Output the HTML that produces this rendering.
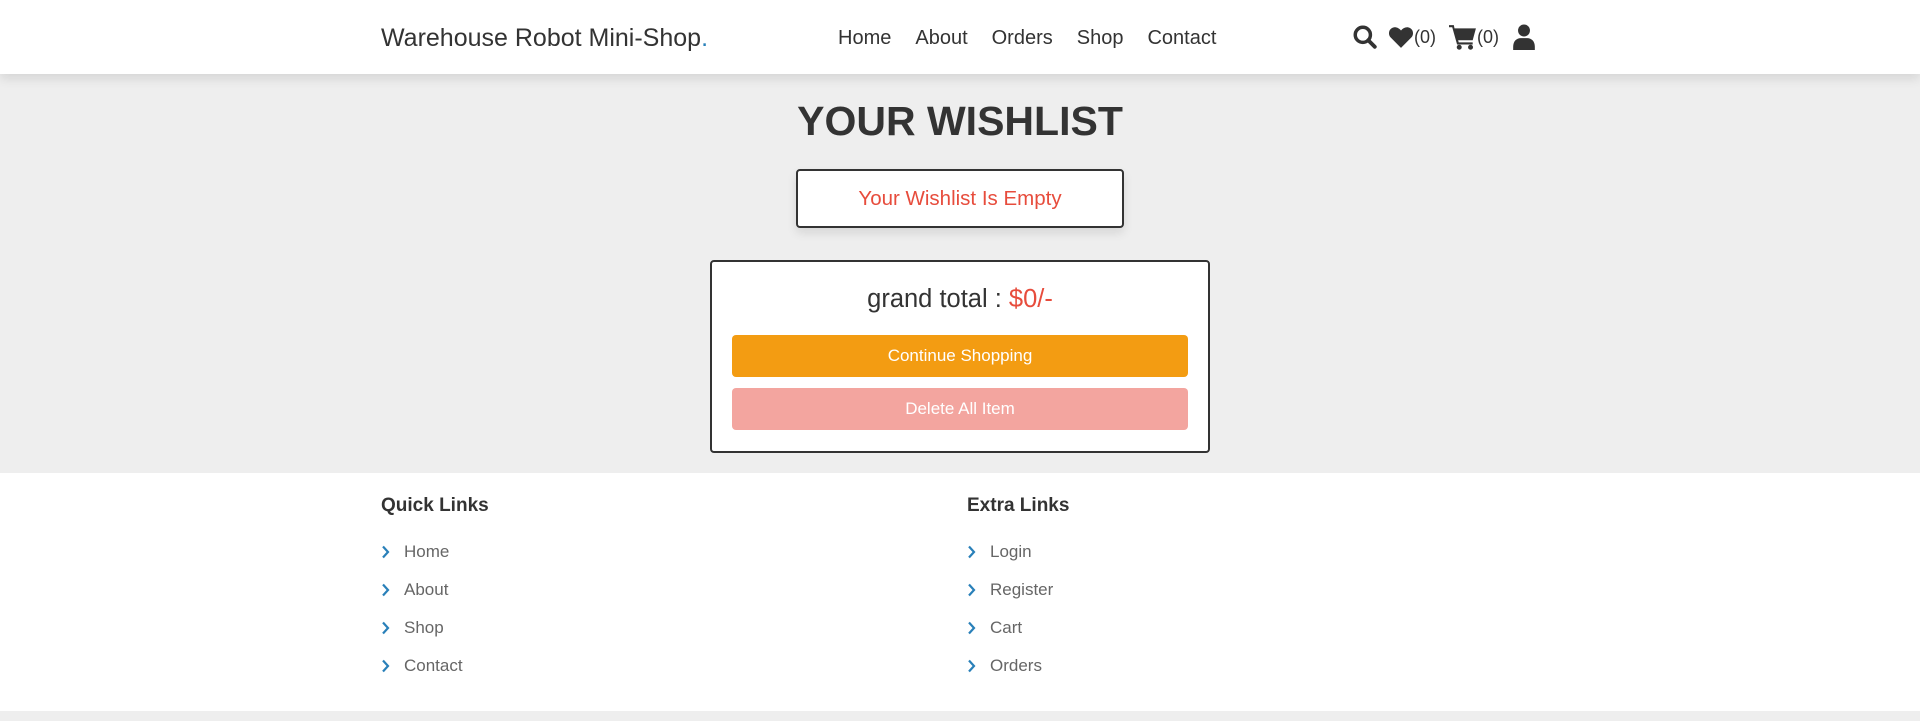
<!DOCTYPE html>
<html><head><meta charset="utf-8"><style>
*{margin:0;padding:0;box-sizing:border-box}
body{width:1920px;height:721px;overflow:hidden;background:#eee;font-family:"Liberation Sans",sans-serif;color:#333}
header{position:absolute;left:0;top:0;width:1920px;height:74px;background:#fff;box-shadow:0 5px 10px rgba(0,0,0,.1);z-index:2}
.logo{position:absolute;left:381px;top:24px;font-size:25px;color:#333}
.logo span{color:#2980b9}
nav{position:absolute;left:838px;top:27px;font-size:20px}
nav a{margin-right:24px;color:#333;text-decoration:none}
.icons{position:absolute;left:1352px;top:24px;display:flex;align-items:center;font-size:18px;color:#333}
.icons svg{fill:#333}
h1{position:absolute;left:0;width:1920px;top:98px;text-align:center;font-size:41px;font-weight:bold;color:#333}
.empty{position:absolute;left:796px;top:169px;width:328px;height:59px;background:#fff;border:2px solid #333;border-radius:4px;box-shadow:0 5px 10px rgba(0,0,0,.1);text-align:center;line-height:55px;font-size:20.5px;color:#e74c3c}
.total{position:absolute;left:710px;top:260px;width:500px;height:193px;background:#fff;border:2px solid #333;border-radius:4px}
.total p{position:absolute;top:23px;width:100%;text-align:center;font-size:25.5px;color:#333}
.total p span{color:#e74c3c}
.btn{position:absolute;left:20px;width:456px;height:42px;border-radius:4px;color:#fff;text-align:center;line-height:42px;font-size:17px}
.b1{top:73px;background:#f39c12}
.b2{top:126px;background:#f3a59f}
footer{position:absolute;left:0;top:473px;width:1920px;height:238px;background:#fff}
.col{position:absolute;top:22px}
.col h3{font-size:19px;font-weight:bold;color:#333;margin-bottom:16px}
.col a{display:flex;align-items:center;font-size:17px;color:#666;height:38px}
.col a svg{width:23px}
</style></head><body>
<header>
<div class="logo">Warehouse Robot Mini-Shop<span>.</span></div>
<nav><a>Home</a><a>About</a><a>Orders</a><a>Shop</a><a>Contact</a></nav>
<div class="icons">
<svg width="26" height="26" viewBox="0 0 24 24"><circle cx="10" cy="10" r="7" fill="none" stroke="#333" stroke-width="3.2"/><path d="M15 15l6 6" stroke="#333" stroke-width="3.6" stroke-linecap="round"/></svg>
<svg style="margin-left:10px" width="26" height="24" viewBox="0 0 24 22"><path d="M12 21L2.5 11.5C0 9 0.5 4.5 3.5 2.8 6.5 1.2 9.8 2.3 12 5 14.2 2.3 17.5 1.2 20.5 2.8 23.5 4.5 24 9 21.5 11.5Z"/></svg><span>(0)</span>
<svg style="margin-left:13px" width="28" height="26" viewBox="0 0 26 24"><path d="M0 1h4.5l.6 3H25l-3 11H8.5l.5 2H22v2H7.5L3 3H0z"/><circle cx="9.5" cy="21.5" r="2.3"/><circle cx="20" cy="21.5" r="2.3"/></svg><span>(0)</span>
<svg style="margin-left:14px" width="22" height="26" viewBox="0 0 20 24"><circle cx="10" cy="6" r="5.5"/><path d="M0 24v-3c0-5 3-8 7-8h6c4 0 7 3 7 8v3z"/></svg>
</div>
</header>
<h1>YOUR WISHLIST</h1>
<div class="empty">Your Wishlist Is Empty</div>
<div class="total">
<p>grand total : <span>$0/-</span></p>
<div class="btn b1">Continue Shopping</div>
<div class="btn b2">Delete All Item</div>
</div>
<footer>
<div class="col" style="left:381px"><h3>Quick Links</h3>
<a><svg height="14" viewBox="0 0 23 14"><path d="M2 1.5l5 5.5-5 5.5" fill="none" stroke="#2980b9" stroke-width="2.2"/></svg>Home</a>
<a><svg height="14" viewBox="0 0 23 14"><path d="M2 1.5l5 5.5-5 5.5" fill="none" stroke="#2980b9" stroke-width="2.2"/></svg>About</a>
<a><svg height="14" viewBox="0 0 23 14"><path d="M2 1.5l5 5.5-5 5.5" fill="none" stroke="#2980b9" stroke-width="2.2"/></svg>Shop</a>
<a><svg height="14" viewBox="0 0 23 14"><path d="M2 1.5l5 5.5-5 5.5" fill="none" stroke="#2980b9" stroke-width="2.2"/></svg>Contact</a></div>
<div class="col" style="left:967px"><h3>Extra Links</h3>
<a><svg height="14" viewBox="0 0 23 14"><path d="M2 1.5l5 5.5-5 5.5" fill="none" stroke="#2980b9" stroke-width="2.2"/></svg>Login</a>
<a><svg height="14" viewBox="0 0 23 14"><path d="M2 1.5l5 5.5-5 5.5" fill="none" stroke="#2980b9" stroke-width="2.2"/></svg>Register</a>
<a><svg height="14" viewBox="0 0 23 14"><path d="M2 1.5l5 5.5-5 5.5" fill="none" stroke="#2980b9" stroke-width="2.2"/></svg>Cart</a>
<a><svg height="14" viewBox="0 0 23 14"><path d="M2 1.5l5 5.5-5 5.5" fill="none" stroke="#2980b9" stroke-width="2.2"/></svg>Orders</a></div>
</footer>
</body></html>
